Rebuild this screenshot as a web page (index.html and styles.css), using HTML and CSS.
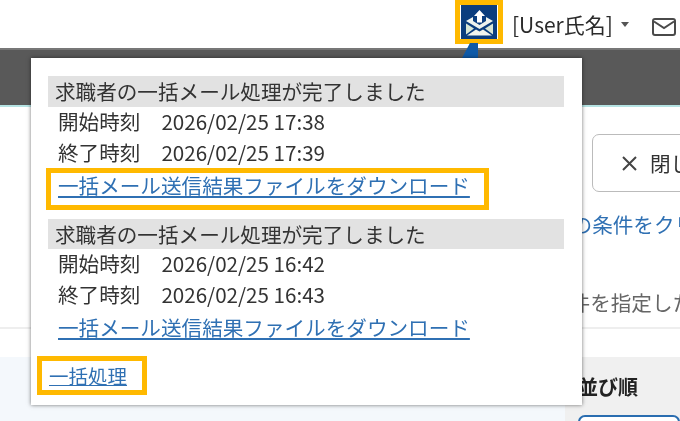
FILE: index.html
```html
<!DOCTYPE html>
<html lang="ja">
  <head>
    <meta charset="utf-8">
    <title>一括処理</title>
    <link rel="stylesheet" href="styles.css">
  </head>
  <body>
    <header class="topbar">
      <div class="notice-btn">
        <svg class="notice-icon" viewBox="0 0 36 34" width="36" height="34">
          <rect width="36" height="34" fill="#0b3d7e"/>
          <path d="M18.500 5l5.500 6h-3v6.500h-5V11h-3z" fill="#fff"/>
          <path d="M5 16l7-4v4l6.500 4 6.500-4v-4l7 4-13.500 8z" fill="#eef3ee"/>
          <path d="M5 18.500l8 5-8 6zM32 18.500l-8 5 8 6z" fill="#d8e6d6"/>
          <path d="M6 30.500l9-6 3.500 2 3.500-2 9 6z" fill="#f2f5ee"/>
        </svg>
      </div>
      <div class="user-name">[User氏名]</div>
      <span class="caret"></span>
      <svg class="mail-icon" viewBox="0 0 24 18" width="24" height="18">
        <rect x="1" y="1" width="22" height="16" rx="2" fill="none" stroke="#4a4a4a" stroke-width="2"/>
        <path d="M2 3.500l10 6.500 10-6.500" fill="none" stroke="#4a4a4a" stroke-width="2"/>
      </svg>
    </header>
    <div class="darkbar"></div>

    <main class="content">
      <div class="content-top">
        <button class="close-btn">
          <svg class="close-x" viewBox="0 0 15 15" width="15" height="15">
            <path d="M1 1l13 13M14 1L1 14" fill="none" stroke="#444" stroke-width="2"/>
          </svg>閉じる</button>
        <p class="cond-link">この条件をクリアする</p>
        <p class="cond-note">条件を指定したら検索</p>
      </div>
      <div class="content-bottom">
        <div class="list-side"></div>
        <div class="sort-side">
          <h3>並び順</h3>
          <div class="sort-select"></div>
        </div>
      </div>
    </main>

    <span class="popup-arrow"></span>
    <section class="popup">
      <div class="result">
        <h4>求職者の一括メール処理が完了しました</h4>
        <div class="time-row"><span>開始時刻</span><span>2026/02/25 17:38</span></div>
        <div class="time-row"><span>終了時刻</span><span>2026/02/25 17:39</span></div>
        <div class="dl-row marked"><a href="#">一括メール送信結果ファイルをダウンロード</a></div>
      </div>
      <div class="result">
        <h4>求職者の一括メール処理が完了しました</h4>
        <div class="time-row"><span>開始時刻</span><span>2026/02/25 16:42</span></div>
        <div class="time-row"><span>終了時刻</span><span>2026/02/25 16:43</span></div>
        <div class="dl-row"><a href="#">一括メール送信結果ファイルをダウンロード</a></div>
      </div>
      <div class="batch-link"><a href="#">一括処理</a></div>
    </section>
  </body>
</html>
```

FILE: styles.css
```css
html, body {
  margin: 0;
  height: 421px;
  overflow: hidden;
  background: #fff;
}

body {
  position: relative;
  font-family: "Noto Sans CJK JP", "Noto Sans", sans-serif;
  color: #333;
  filter: blur(0.4px);
}

a {
  color: #2f70b3;
}

.topbar {
  display: flex;
  align-items: center;
  height: 48px;
  padding-left: 455px;
  box-sizing: border-box;
}

.notice-btn {
  display: flex;
  align-items: center;
  justify-content: center;
  width: 48px;
  height: 44px;
  margin-top: -4px;
  border: 5px solid #ffb900;
  box-sizing: border-box;
}

.user-name {
  margin-left: 9px;
  font-size: 21px;
  color: #2b2b2b;
  white-space: nowrap;
}

.caret {
  width: 0;
  height: 0;
  margin-left: 8px;
  border-left: 4px solid transparent;
  border-right: 4px solid transparent;
  border-top: 5px solid #555;
}

.mail-icon {
  margin-left: 23px;
  margin-top: 6px;
}

.darkbar {
  height: 55px;
  background: #595959;
  border-top: 2px solid #777;
  border-bottom: 2px solid #b5e3e3;
  margin-bottom: -2px;
}

.content-top {
  height: 224px;
  padding: 29px 0 0 592px;
  border-bottom: 2px solid #eee;
  box-sizing: border-box;
}

.close-btn {
  display: flex;
  align-items: center;
  width: 140px;
  height: 58px;
  padding: 0 0 0 29px;
  background: #fff;
  border: 1px solid #bbb;
  border-radius: 7px;
  font-family: inherit;
  font-size: 20.600px;
  color: #333;
  white-space: nowrap;
}

.close-x {
  margin-right: 13px;
}

.cond-link, .cond-note {
  margin: 0;
  font-size: 20.600px;
  line-height: 30px;
  white-space: nowrap;
}

.cond-link {
  margin-left: -41px;
  margin-top: 17px;
  color: #2f70b3;
}

.cond-note {
  margin-left: -43px;
  margin-top: 48px;
  color: #666;
}

.content-bottom {
  display: flex;
  margin-top: 28px;
  height: 64px;
}

.list-side {
  width: 565px;
  background: #f4f8fc;
}

.sort-side {
  flex: 1;
  padding-left: 13px;
  background: #f0f0f0;
}

.sort-side h3 {
  margin: 16px 0 0;
  font-size: 20px;
  line-height: 28px;
  color: #222;
}

.sort-select {
  height: 30px;
  margin-top: 14px;
  border: 2px solid #2a6db0;
  border-radius: 7px;
  background: #fff;
}

.popup-arrow {
  position: absolute;
  left: 462px;
  top: 43px;
  width: 16px;
  height: 15px;
  background: #0f5aa8;
  clip-path: polygon(50% 0, 100% 0, 100% 100%, 0 100%);
}

.popup {
  position: absolute;
  left: 31px;
  top: 58px;
  width: 551px;
  height: 347px;
  padding: 18px 18px 0 17px;
  box-sizing: border-box;
  background: #fff;
  box-shadow: 0 0 4px rgba(0, 0, 0, 0.55);
  font-size: 20.600px;
  color: #333;
}

.result {
  margin-bottom: 17px;
}

.result h4 {
  margin: 0;
  height: 31px;
  padding-left: 7px;
  background: #e2e2e2;
  font-size: 20.600px;
  font-weight: 400;
  line-height: 31px;
  white-space: nowrap;
}

.result + .result h4 {
  height: 30px;
  line-height: 30px;
}

.time-row {
  display: flex;
  gap: 21px;
  height: 31px;
  padding-left: 10px;
  line-height: 29px;
}

.dl-row {
  position: relative;
  height: 33px;
  padding-left: 10px;
  line-height: 32px;
  white-space: nowrap;
}

.marked::after {
  content: "";
  position: absolute;
  left: -2px;
  top: -1px;
  width: 443px;
  height: 42px;
  border: 5px solid #ffb900;
  box-sizing: border-box;
}

.batch-link {
  position: absolute;
  left: 6px;
  top: 298px;
  width: 110px;
  height: 39px;
  padding-left: 7px;
  border: 5px solid #ffb900;
  box-sizing: border-box;
  line-height: 29px;
  font-size: 19.500px;
  white-space: nowrap;
}
```
